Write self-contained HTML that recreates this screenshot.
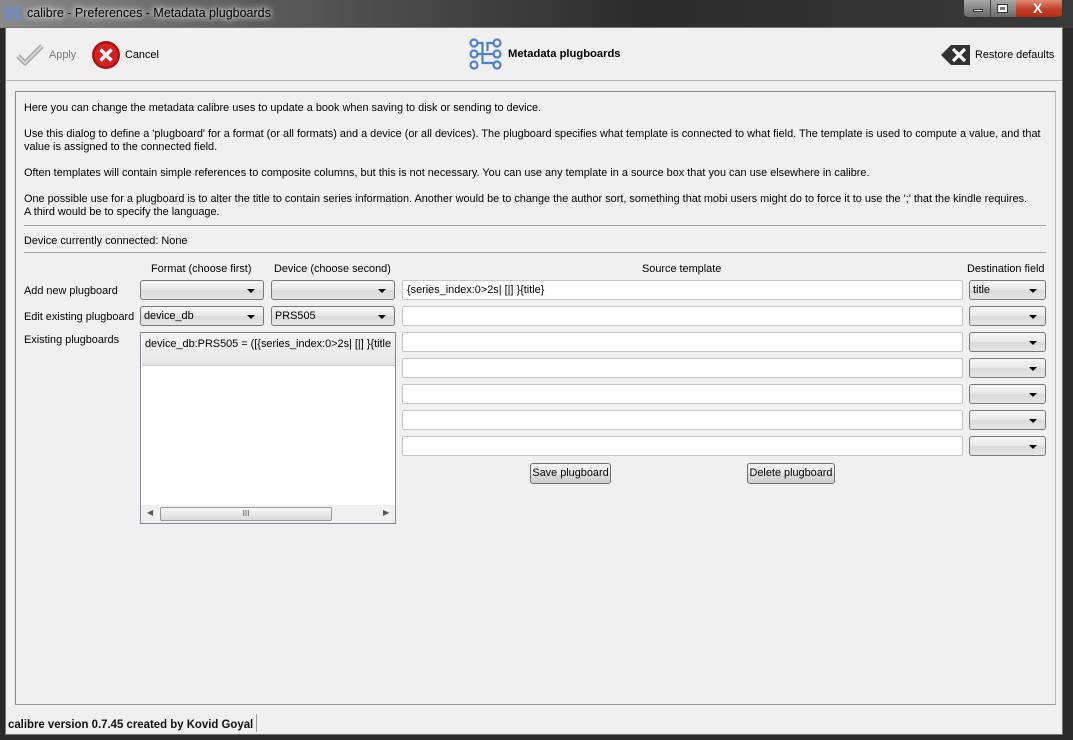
<!DOCTYPE html>
<html><head><meta charset="utf-8"><style>
*{margin:0;padding:0;box-sizing:border-box}
body{width:1073px;height:740px;background:#2a2a2a;font-family:"Liberation Sans",sans-serif;font-size:10.9px;color:#000;position:relative;overflow:hidden}
.a{position:absolute;white-space:nowrap}
.title{left:0;top:0;width:1073px;height:28px;background:linear-gradient(90deg,#8a8a8a 0,#5a5a5a 25%,#2b2b2b 60%,#3a3a3a 100%)}
.win{left:5px;top:27px;width:1058px;height:708px;background:#f0f0f0;border:1px solid #777}
.combo{height:20px;border:1px solid #777;border-radius:3px;background:linear-gradient(#f6f6f6,#e8e8e8 50%,#d9d9d9 51%,#e6e6e6);padding:0 3px;line-height:18px;font-size:10.9px}
.combo:after{content:"";position:absolute;right:8px;top:8px;border-left:4px solid transparent;border-right:4px solid transparent;border-top:4px solid #000}
.edit{height:20px;border:1px solid #c6c6c6;border-radius:2px;background:#fff;padding:0 4px;line-height:18px}
.btn{height:21px;border:1px solid #707070;border-radius:3px;background:linear-gradient(#f2f2f2,#ebebeb 50%,#dddddd 51%,#cfcfcf);text-align:center;line-height:19px}
</style></head><body>
<div class="a title"></div>
<svg class="a" style="left:5px;top:5px" width="16" height="16" viewBox="0 0 16 16"><g fill="none" stroke="#6a8fd0" stroke-width="1.5"><circle cx="3" cy="3" r="2"/><circle cx="13" cy="3" r="2"/><circle cx="3" cy="8" r="2"/><circle cx="13" cy="8" r="2"/><circle cx="3" cy="13" r="2"/><circle cx="13" cy="13" r="2"/><path d="M5 8h6M8 3v10"/></g></svg>
<div class="a" style="left:27px;top:6px;color:#000;font-size:12.5px;text-shadow:0 0 8px #fff,0 0 6px #fff">calibre - Preferences - Metadata plugboards</div>
<div class="a" style="left:963px;top:0;width:100px;height:18px;border:1px solid #333;border-top:none;border-radius:0 0 5px 5px;background:linear-gradient(#a8a8a8,#6a6a6a);overflow:hidden">
<div class="a" style="left:26px;top:0;width:1px;height:18px;background:#444"></div>
<div class="a" style="left:52px;top:0;width:48px;height:18px;background:linear-gradient(#e08a76,#c2412a 50%,#b32a10)"></div>
<div class="a" style="left:9px;top:9px;width:10px;height:3px;background:#fff;border:1px solid #333"></div>
<div class="a" style="left:33px;top:4px;width:11px;height:9px;border:1px solid #333;background:#fff"><div style="margin:2px;height:3px;background:#777"></div></div>
<div class="a" style="left:69px;top:0px;color:#fff;font-weight:bold;font-size:14px">X</div>
</div>
<div class="a win">
 <div class="a" style="left:0;top:52px;width:1056px;height:1px;background:#b4b4b4"></div>
 <svg class="a" style="left:10px;top:16px" width="28" height="22" viewBox="0 0 28 22"><path d="M2 12l7 7L26 2" fill="none" stroke="#a8a8a8" stroke-width="5" stroke-linejoin="round"/><path d="M2 12l7 7L26 2" fill="none" stroke="#d4d4d4" stroke-width="2"/></svg>
 <div class="a" style="left:43px;top:21px;color:#777">Apply</div>
 <svg class="a" style="left:85px;top:12px" width="30" height="30" viewBox="0 0 30 30"><circle cx="15" cy="15" r="14" fill="#b01010"/><circle cx="15" cy="15" r="11.5" fill="#d42222"/><path d="M9.5 9.5l11 11M20.5 9.5l-11 11" stroke="#fff" stroke-width="3.4"/></svg>
 <div class="a" style="left:119px;top:21px">Cancel</div>
 <svg class="a" style="left:463px;top:10px" width="34" height="32" viewBox="0 0 34 32"><g fill="none" stroke="#4f7fc8" stroke-width="2.2"><circle cx="5" cy="5" r="3.5"/><circle cx="28" cy="5" r="3.5"/><circle cx="5" cy="16" r="3.5"/><circle cx="28" cy="16" r="3.5"/><circle cx="5" cy="27" r="3.5"/><circle cx="28" cy="27" r="3.5"/><path d="M8.5 5h5v20h11M8.5 16h16M24.5 5h-6v8"/></g></svg>
 <div class="a" style="left:502px;top:20px;font-weight:bold;font-size:11.2px">Metadata plugboards</div>
 <svg class="a" style="left:935px;top:16px" width="30" height="22" viewBox="0 0 30 22"><path d="M0 11L10 1h19v20H10z" fill="#333"/><path d="M12 5l12 12M24 5L12 17" stroke="#fff" stroke-width="3.2"/></svg>
 <div class="a" style="left:969px;top:21px">Restore defaults</div>

 <div class="a" style="left:9px;top:63px;width:1041px;height:614px;border:1px solid #888;border-right-color:#bbb;border-bottom-color:#999"></div>
 <div class="a" style="left:18px;top:74px">Here you can change the metadata calibre uses to update a book when saving to disk or sending to device.</div>
 <div class="a" style="left:18px;top:100px">Use this dialog to define a 'plugboard' for a format (or all formats) and a device (or all devices). The plugboard specifies what template is connected to what field. The template is used to compute a value, and that</div>
 <div class="a" style="left:18px;top:113px">value is assigned to the connected field.</div>
 <div class="a" style="left:18px;top:139px">Often templates will contain simple references to composite columns, but this is not necessary. You can use any template in a source box that you can use elsewhere in calibre.</div>
 <div class="a" style="left:18px;top:165px">One possible use for a plugboard is to alter the title to contain series information. Another would be to change the author sort, something that mobi users might do to force it to use the ';' that the kindle requires.</div>
 <div class="a" style="left:18px;top:178px">A third would be to specify the language.</div>
 <div class="a" style="left:18px;top:197px;width:1022px;height:1px;background:#a0a0a0"></div>
 <div class="a" style="left:18px;top:207px">Device currently connected: None</div>
 <div class="a" style="left:18px;top:224px;width:1022px;height:1px;background:#a0a0a0"></div>

 <div class="a" style="left:145px;top:235px">Format (choose first)</div>
 <div class="a" style="left:268px;top:235px">Device (choose second)</div>
 <div class="a" style="left:636px;top:235px">Source template</div>
 <div class="a" style="left:961px;top:235px">Destination field</div>

 <div class="a" style="left:18px;top:257px">Add new plugboard</div>
 <div class="a" style="left:18px;top:283px">Edit existing plugboard</div>
 <div class="a" style="left:18px;top:306px">Existing plugboards</div>

 <div class="a combo" style="left:134px;top:252px;width:124px"></div>
 <div class="a combo" style="left:265px;top:252px;width:124px"></div>
 <div class="a combo" style="left:134px;top:278px;width:124px">device_db</div>
 <div class="a combo" style="left:265px;top:278px;width:124px">PRS505</div>

 <div class="a" style="left:134px;top:304px;width:256px;height:192px;border:1px solid #828790;background:#fff;overflow:hidden">
  <div class="a" style="left:1px;top:1px;width:253px;height:32px;background:linear-gradient(#f4f4f4,#e6e6e6);border-bottom:1px solid #ccc;padding:4px 3px">device_db:PRS505 = ([{series_index:0&gt;2s| [|] }{title</div>
  <div class="a" style="left:0;top:172px;width:254px;height:18px;background:#f0f0f0">
   <div class="a" style="left:6px;top:3px;font-size:8px;color:#555">◀</div>
   <div class="a" style="left:19px;top:2px;width:172px;height:14px;border:1px solid #999;border-radius:2px;background:linear-gradient(#f8f8f8,#dadada);text-align:center;font-size:8px;line-height:12px;color:#444">III</div>
   <div class="a" style="left:242px;top:3px;font-size:8px;color:#555">▶</div>
  </div>
 </div>

 <div class="a edit" style="left:396px;top:252px;width:561px">{series_index:0&gt;2s| [|] }{title}</div>
 <div class="a edit" style="left:396px;top:278px;width:561px"></div>
 <div class="a edit" style="left:396px;top:304px;width:561px"></div>
 <div class="a edit" style="left:396px;top:330px;width:561px"></div>
 <div class="a edit" style="left:396px;top:356px;width:561px"></div>
 <div class="a edit" style="left:396px;top:382px;width:561px"></div>
 <div class="a edit" style="left:396px;top:408px;width:561px"></div>

 <div class="a combo" style="left:963px;top:252px;width:77px">title</div>
 <div class="a combo" style="left:963px;top:278px;width:77px"></div>
 <div class="a combo" style="left:963px;top:304px;width:77px"></div>
 <div class="a combo" style="left:963px;top:330px;width:77px"></div>
 <div class="a combo" style="left:963px;top:356px;width:77px"></div>
 <div class="a combo" style="left:963px;top:382px;width:77px"></div>
 <div class="a combo" style="left:963px;top:408px;width:77px"></div>

 <div class="a btn" style="left:524px;top:435px;width:81px">Save plugboard</div>
 <div class="a btn" style="left:741px;top:435px;width:88px">Delete plugboard</div>

 <div class="a" style="left:2px;top:689px;font-size:12px;transform:scaleX(0.95);transform-origin:left;font-weight:bold;color:#111">calibre version 0.7.45 created by Kovid Goyal</div>
 <div class="a" style="left:250px;top:686px;width:1px;height:18px;background:#999"></div>
</div>
</body></html>
